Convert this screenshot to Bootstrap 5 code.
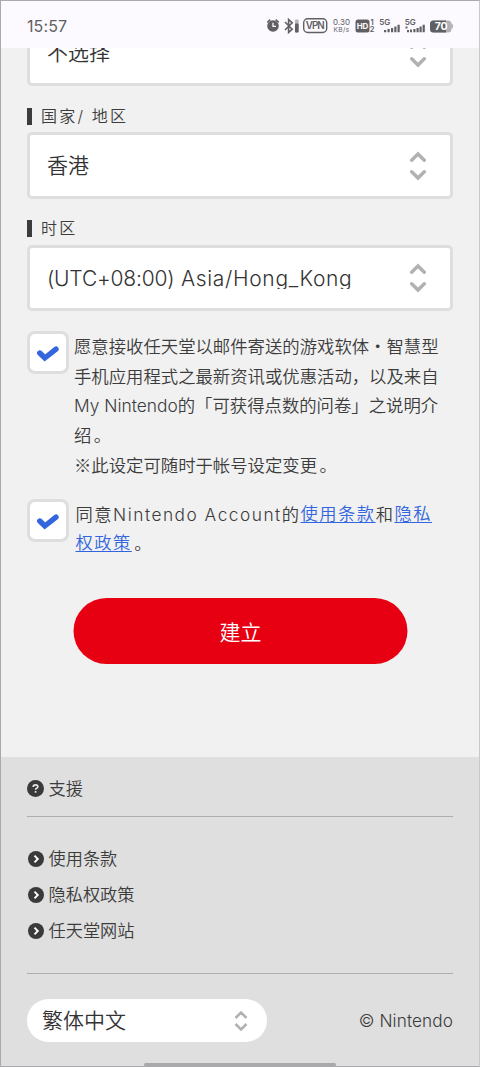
<!DOCTYPE html>
<html lang="zh-Hans">
<head>
<meta charset="utf-8">
<meta name="viewport" content="width=device-width, initial-scale=1">
<title>Nintendo Account</title>
<link href="https://cdn.jsdelivr.net/npm/bootstrap@5.3.0/dist/css/bootstrap.min.css" rel="stylesheet">
<style>
  body { margin: 0; background: #f1f1f1; color: #3c3c3c; font-family: Inter, "Noto Sans CJK SC", sans-serif; font-weight: 350; }
  .phone { width: 480px; height: 1067px; }
  .phone-edge { position: absolute; inset: 0; border: 1px solid #aaa9ab; border-right-color: #c9c9c9; pointer-events: none; }
  .status { height: 48px; padding: 3px 27px 0 27px; background: #fcfaff; color: #606063; flex: none; }
  .clock { font-size: 16px; font-weight: 400; letter-spacing: .1px; }
  .page { padding: 0 27px; height: 709px; overflow: hidden; flex: none; }
  .pick { height: 67px; border: 3px solid #dedede; border-radius: 5px; background: #fff; padding: 0 24px 0 17px; color: #333; font-size: 21px; }
  .pick.first { margin-top: -29px; }
  .pick.zone { height: 66px; }
  .pick .val { line-height: 30px; height: 30px; white-space: nowrap; }
  .pick .val.clip { font-size: 21px; font-weight: 300; letter-spacing: .68px; height: 21px; line-height: 21px; overflow: hidden; }
  .offset-part { letter-spacing: -.2px; }
  .field-name { height: 17px; line-height: 17px; font-size: 16px; letter-spacing: 2.2px; }
  .field-name::before { content: ""; width: 5px; height: 17px; background: #3c3c3c; margin-right: 9px; }
  .tick { width: 42px; height: 43px; border: 3px solid #dedede; border-radius: 8px; background: #fff; flex: none; }
  .terms { font-size: 17.36px; line-height: 29.5px; white-space: nowrap; margin-left: 5px; padding-top: 1px; }
  .terms.wide { font-size: 17.3px; letter-spacing: 1.5px; line-height: 29px; margin-left: 6.500px; }
  .terms a { color: #3366de; text-decoration: underline; text-decoration-thickness: 1px; text-underline-offset: 2px; position: relative; top: -1px; }
  .cjk { font-family: "Noto Sans CJK SC", sans-serif; }
  .stop { margin-left: 2.500px; }
  .go { width: 334px; height: 66px; background: #e70012; color: #fff; font-size: 21px; font-weight: 350; border: 0; margin: 40px auto 0; padding-top: 9px; transform: translateX(.5px); }
  .foot { background: #dfdfdf; padding: 0 27px; height: 310px; font-size: 17.2px; }
  .foot .entry { height: 36px; line-height: 36px; }
  .foot .entry svg { margin-right: 4.500px; }
  .rule { height: 1px; background: #aeaeae; }
  .lang { width: 240px; height: 43px; background: #fff; font-size: 21px; padding: 0 19px 0 15px; color: #333; }
  .home { position: absolute; left: 144px; top: 1063px; width: 192px; height: 3px; border-radius: 2px; background: #a9a9a9; }
</style>
</head>
<body>
<div class="phone position-relative d-flex flex-column overflow-hidden">
  <header class="status d-flex align-items-center justify-content-between">
    <span class="clock">15:57</span>
    <svg width="190" height="24" viewBox="265 14 190 24" fill="#606063" style="margin-right:-2px" font-family="Inter, sans-serif">
      <circle cx="273" cy="26" r="5.8"/><path d="M267.3 22.3l3-2.7M278.7 22.3l-3-2.7" stroke="#606063" stroke-width="1.6"/>
      <path d="M273 22.8v3.5h3" fill="none" stroke="#fcfaff" stroke-width="1.3"/>
      <path d="M285 22l7.2 7.2-3.6 3.3V19.5l3.6 3.3L285 30" fill="none" stroke="#606063" stroke-width="1.6"/>
      <rect x="295" y="19.5" width="3.6" height="13" rx="1" opacity=".45"/><rect x="295" y="23.5" width="3.6" height="9" rx="1"/>
      <rect x="303.7" y="18.7" width="23" height="13.8" rx="4" fill="none" stroke="#606063" stroke-width="1.4"/>
      <text x="305.8" y="29.3" font-size="9.8" font-weight="600" textLength="19">VPN</text>
      <text x="333" y="25.3" font-size="8" font-weight="400" textLength="17">0.30</text>
      <text x="333.6" y="32.4" font-size="6.6" font-weight="400" textLength="15.6">KB/s</text>
      <rect x="355.5" y="19.5" width="14" height="13" rx="2.5"/>
      <text x="356.8" y="29" font-size="8" font-weight="700" fill="#fcfaff" textLength="11.4">HD</text>
      <text x="370.6" y="25" font-size="7.5" font-weight="600">1</text><text x="369.8" y="32.3" font-size="7.5" font-weight="600">2</text>
      <text x="379.3" y="25.3" font-size="8" font-weight="600" textLength="11">5G</text>
      <path d="M384 30h2.2v2.2H384zM387.5 29h2.2v3.2h-2.2zM391 28h2.2v4.2H391zM394.3 26.5h2.2v5.7h-2.2zM397.5 24.8h2.2v7.4h-2.2z"/>
      <text x="404.8" y="25.3" font-size="8" font-weight="600" textLength="11">5G</text>
      <path d="M405.5 26.5h2v2h-2zM407 30h2v2.2h-2zM410 29.5h2v2.7h-2zM413.3 29h2.2v3.2h-2.2zM416.5 28h2.2v4.2h-2.2zM419.5 26.5h2.2v5.7h-2.2zM422.6 24.8h2.2v7.4h-2.2z"/>
      <rect x="430" y="20.4" width="21.5" height="12" rx="3.5" fill="#b3b1b5"/><path d="M451.300 23.700h.8q2.200 2.500 0 5h-.8z" fill="#b3b1b5"/>
      <path d="M433.5 20.4H446v12h-12.500q-3.500 0-3.500-3.500v-5q0-3.500 3.500-3.500z"/>
      <text x="434.7" y="30.2" font-size="10.5" font-weight="700" fill="#fff" textLength="13">70</text>
    </svg>
  </header>

  <main class="page">
    <div class="pick first d-flex align-items-center justify-content-between">
      <span class="val">不选择</span>
      <svg width="16" height="30" viewBox="0 0 16 30" fill="none" stroke="#b1b1b1" stroke-width="3.4" stroke-linecap="round"><path d="M1.700 9.300L8 3l6.300 6.300M1.700 20.700L8 27l6.300-6.300"/></svg>
    </div>
    <div class="field-name d-flex align-items-center" style="margin:22px 0 7px">国家/ 地区</div>
    <div class="pick d-flex align-items-center justify-content-between">
      <span class="val">香港</span>
      <svg width="16" height="30" viewBox="0 0 16 30" fill="none" stroke="#b1b1b1" stroke-width="3.4" stroke-linecap="round"><path d="M1.700 9.300L8 3l6.300 6.300M1.700 20.700L8 27l6.300-6.300"/></svg>
    </div>
    <div class="field-name d-flex align-items-center" style="margin:21px 0 8px">时区</div>
    <div class="pick zone d-flex align-items-center justify-content-between">
      <span class="val clip"><span class="offset-part">(UTC+08:00)</span> Asia/Hong_Kong</span>
      <svg width="16" height="30" viewBox="0 0 16 30" fill="none" stroke="#b1b1b1" stroke-width="3.4" stroke-linecap="round"><path d="M1.700 9.300L8 3l6.300 6.300M1.700 20.700L8 27l6.300-6.300"/></svg>
    </div>

    <div class="d-flex" style="margin-top:20px;height:168px">
      <div class="tick d-flex align-items-center justify-content-center">
        <svg width="24" height="18" viewBox="0 0 24 18" fill="none" stroke="#3366de" stroke-width="5.400" stroke-linecap="round"><path d="M3.800 9l5 5L20 5.200" stroke-linejoin="miter"/></svg>
      </div>
      <div class="terms">愿意接收任天堂以邮件寄送的游戏软体・智慧型<br>手机应用程式之最新资讯或优惠活动，以及来自<br>My Nintendo的「可获得点数的问卷」之说明介<br>绍<span class="stop">。</span><br><span class="cjk">※</span>此设定可随时于帐号设定变更<span class="stop">。</span></div>
    </div>
    <div class="d-flex" style="height:59px">
      <div class="tick d-flex align-items-center justify-content-center">
        <svg width="24" height="18" viewBox="0 0 24 18" fill="none" stroke="#3366de" stroke-width="5.400" stroke-linecap="round"><path d="M3.800 9l5 5L20 5.200" stroke-linejoin="miter"/></svg>
      </div>
      <div class="terms wide">同意Nintendo Account的<a href="#">使用条款</a>和<a href="#">隐私<br>权政策</a><span class="stop">。</span></div>
    </div>
    <button class="go btn rounded-pill d-flex align-items-center justify-content-center">建立</button>
  </main>

  <footer class="foot">
    <div class="entry d-flex align-items-center" style="padding-top:13px;height:50px">
      <svg width="17" height="17" viewBox="0 0 17 17"><circle cx="8.500" cy="8.500" r="8.500" fill="#3a3a3a"/><path d="M6.200 7q0-2.200 2.300-2.200T10.800 6.800q0 1-1.100 1.500-1.100.4-1.100 1.400M8.600 11v1.700" fill="none" stroke="#e6e6e6" stroke-width="1.7"/></svg>支援
    </div>
    <div class="rule" style="margin:9px 0 24px"></div>
    <div class="entry d-flex align-items-center"><svg width="17" height="17" viewBox="0 0 17 17"><circle cx="9" cy="8" r="8" fill="#3a3a3a"/><path d="M7.500 4.700l3.300 3.300-3.300 3.300" fill="none" stroke="#fff" stroke-width="1.900"/></svg>使用条款</div>
    <div class="entry d-flex align-items-center"><svg width="17" height="17" viewBox="0 0 17 17"><circle cx="9" cy="8" r="8" fill="#3a3a3a"/><path d="M7.500 4.700l3.300 3.300-3.300 3.300" fill="none" stroke="#fff" stroke-width="1.900"/></svg>隐私权政策</div>
    <div class="entry d-flex align-items-center"><svg width="17" height="17" viewBox="0 0 17 17"><circle cx="9" cy="8" r="8" fill="#3a3a3a"/><path d="M7.500 4.700l3.300 3.300-3.300 3.300" fill="none" stroke="#fff" stroke-width="1.900"/></svg>任天堂网站</div>
    <div class="rule" style="margin:24px 0 25px"></div>
    <div class="d-flex align-items-center justify-content-between">
      <div class="lang rounded-pill d-flex align-items-center justify-content-between">
        <span>繁体中文</span>
        <svg width="14" height="22" viewBox="0 0 14 22" fill="none" stroke="#b1b1b1" stroke-width="2.500"><path d="M1.500 8L7 2.500 12.500 8M1.500 14L7 19.500 12.500 14"/></svg>
      </div>
      <span style="letter-spacing:.1px">© Nintendo</span>
    </div>
  </footer>
  <div class="home"></div>
  <div class="phone-edge"></div>
</div>
<script src="https://cdn.jsdelivr.net/npm/bootstrap@5.3.0/dist/js/bootstrap.bundle.min.js"></script>
</body>
</html>
